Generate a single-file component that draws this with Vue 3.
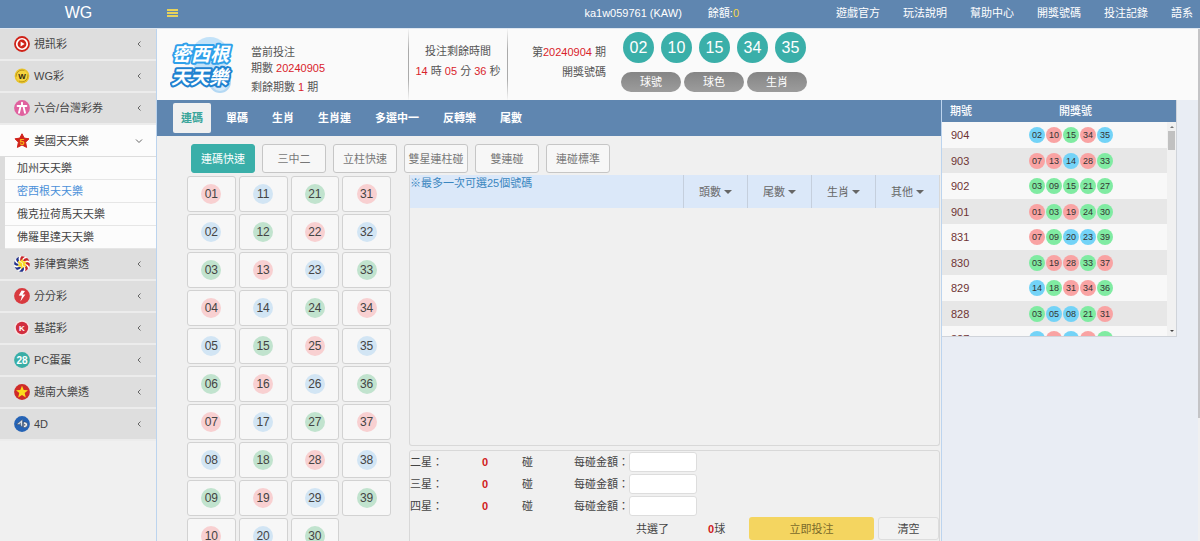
<script setup>
import { ref } from 'vue'

const topLinks = ['遊戲官方', '玩法說明', '幫助中心', '開獎號碼', '投注記錄']

const menu = [
  { icon: 'play', label: '視訊彩' },
  { icon: 'wg', label: 'WG彩' },
  { icon: 'six', label: '六合/台灣彩券' },
  {
    icon: 'star', label: '美國天天樂', open: true,
    children: ['加州天天樂', '密西根天天樂', '俄克拉荷馬天天樂', '佛羅里達天天樂'],
  },
  { icon: 'ph', label: '菲律賓樂透' },
  { icon: 'bolt', label: '分分彩' },
  { icon: 'keno', label: '基諾彩' },
  { icon: 'pc', label: 'PC蛋蛋' },
  { icon: 'vn', label: '越南大樂透' },
  { icon: 'four', label: '4D' },
]
const currentGame = '密西根天天樂'

const tabs = ['連碼', '單碼', '生肖', '生肖連', '多選中一', '反轉樂', '尾數']
const modes = ['連碼快速', '三中二', '立柱快速', '雙星連柱碰', '雙連碰', '連碰標準']
const activeTab = ref('連碼')
const activeMode = ref('連碼快速')
const views = ['球號', '球色', '生肖']
const filters = ['頭數', '尾數', '生肖', '其他']
const stars = ['二星', '三星', '四星']
const lastDraw = ['02', '10', '15', '34', '35']

const red = [1, 4, 7, 10, 13, 16, 19, 22, 25, 28, 31, 34, 37]
const blue = [2, 5, 8, 11, 14, 17, 20, 23, 26, 29, 32, 35, 38]
const colour = (n) => (red.includes(+n) ? 'red' : blue.includes(+n) ? 'blue' : 'green')
const pad = (n) => String(n).padStart(2, '0')

const cells = []
for (let row = 1; row <= 10; row++) {
  for (let col = 0; col < 4; col++) {
    const n = row + col * 10
    if (n <= 39) cells.push(pad(n))
  }
}

const history = [
  ['904', '02 10 15 34 35'],
  ['903', '07 13 14 28 33'],
  ['902', '03 09 15 21 27'],
  ['901', '01 03 19 24 30'],
  ['831', '07 09 20 23 39'],
  ['830', '03 19 28 33 37'],
  ['829', '14 18 31 34 36'],
  ['828', '03 05 08 21 31'],
  ['827', '02 10 17 22 36'],
].map(([id, balls]) => ({ id, balls: balls.split(' ') }))

const swirl = [0, 45, 90, 135, 180, 225, 270, 315]
</script>

<template>
  <div class="page">
    <header class="topbar">
      <div class="brand">WG</div>
      <button class="burger" aria-label="選單"><i></i><i></i><i></i></button>
      <div class="account">
        <span>ka1w059761 (KAW)</span>
        <span>餘額:<b>0</b></span>
      </div>
      <nav class="top-links">
        <a v-for="l in topLinks" :key="l" href="#">{{ l }}</a>
        <a href="#">語系</a>
      </nav>
    </header>

    <div class="body">
      <aside class="sidebar">
        <div v-for="m in menu" :key="m.label">
          <a href="#" class="menu-item" :class="{ open: m.open }">
            <svg class="menu-icon" viewBox="0 0 16 16" aria-hidden="true">
              <template v-if="m.icon === 'play'">
                <circle cx="8" cy="8" r="7" fill="#fff" stroke="#cf2218" stroke-width="1.8" />
                <circle cx="8" cy="8" r="4.4" fill="#cf2218" />
                <path d="M6.6 5.4 10.6 8 6.6 10.6z" fill="#fff" />
              </template>
              <template v-else-if="m.icon === 'wg'">
                <circle cx="8" cy="8" r="7.4" fill="#e9c42c" />
                <circle cx="8" cy="8" r="5.8" fill="#f5d540" stroke="#a98512" stroke-width=".7" stroke-dasharray="12 5" />
                <text x="8" y="11" text-anchor="middle" font-size="8" font-weight="700" fill="#332a10">W</text>
              </template>
              <template v-else-if="m.icon === 'six'">
                <circle cx="8" cy="8" r="7.9" fill="#e0619f" />
                <path d="M8 2.8v2.7M3.6 6h8.8M6.3 7.4 5 12.8M9.7 7.4 11 12.8" stroke="#fff" stroke-width="1.9" fill="none" stroke-linecap="round" />
              </template>
              <template v-else-if="m.icon === 'star'">
                <path d="M8 .8 10.2 5.1 15 5.8 11.6 9.2 12.6 14.4 8 12 3.4 14.4 4.4 9.2 1 5.8 5.8 5.1z" fill="#d0211a" stroke="#d0211a" stroke-linejoin="round" />
                <text x="8" y="11.6" text-anchor="middle" font-size="9" font-weight="700" fill="#f9b616">5</text>
              </template>
              <template v-else-if="m.icon === 'ph'">
                <circle cx="8" cy="8" r="7.9" fill="#fff" />
                <path
                  v-for="a in swirl" :key="a" :transform="`rotate(${a} 8 8)`"
                  d="M8 4.2Q8.4 1.8 11 .7A7.9 7.9 0 0 0 7.4.2Q5.6 2 6 5z"
                  :fill="a < 180 ? '#c9252b' : '#22308a'"
                />
                <path
                  v-for="a in [0, 60, 120, 180, 240, 300]" :key="'y' + a" :transform="`rotate(${a} 8 8)`"
                  d="M6 8Q5.6 4.4 9 2.8 8.2 5.4 10 8z" fill="#f7d823"
                />
                <path d="M5.2 5.2Q9.6 6.4 8.6 8.6T11 11.4" fill="none" stroke="#fff6c4" />
              </template>
              <template v-else-if="m.icon === 'bolt'">
                <circle cx="8" cy="8" r="7.9" fill="#d83a3f" />
                <path d="M7.6 2.6 4.8 7.4 8 7.8 6.4 13.4 11.4 6.6 8.6 6.4 11 3z" fill="#fff" />
              </template>
              <template v-else-if="m.icon === 'keno'">
                <circle cx="8" cy="8" r="7.8" fill="#f7e4e4" />
                <circle cx="8" cy="8" r="6.2" fill="#d22e3e" />
                <text x="8" y="10.9" text-anchor="middle" font-size="8" font-weight="700" fill="#fff">K</text>
              </template>
              <template v-else-if="m.icon === 'pc'">
                <circle cx="8" cy="8" r="7.9" fill="#3aaea6" />
                <text x="8" y="11.5" text-anchor="middle" font-size="10" font-weight="700" fill="#fff">28</text>
              </template>
              <template v-else-if="m.icon === 'vn'">
                <circle cx="8" cy="8" r="7.9" fill="#cf2b28" />
                <path d="M8 1.8 9.7 6 14 6.2 10.7 9 11.8 13.4 8 11 4.2 13.4 5.3 9 2 6.2 6.3 6z" fill="#fbdc1c" />
              </template>
              <template v-else>
                <circle cx="8" cy="8" r="7.9" fill="#2563b5" />
                <path d="M8.2 3.6 2.4 8.6h4.4v1.8h1.8V4z" fill="#dfe6ee" stroke="#29384c" stroke-width=".5" />
                <path d="M6.8 6.6v1.2H5.4z" fill="#29384c" />
                <path d="M9.4 6h1.4a2.7 2.7 0 0 1 0 5.4H9.4z" fill="#fff" stroke="#29384c" stroke-width=".6" />
                <path d="M10.8 7.8v1.8" stroke="#29384c" />
              </template>
            </svg>
            <span>{{ m.label }}</span>
            <svg class="chevron" viewBox="0 0 8 8" aria-hidden="true">
              <path :d="m.open ? 'M1 2.5 4 5.5 7 2.5' : 'M5.5 1.5 3 4 5.5 6.5'" />
            </svg>
          </a>
          <div v-if="m.children" class="submenu">
            <a v-for="c in m.children" :key="c" href="#" :class="{ current: c === currentGame }">{{ c }}</a>
          </div>
        </div>
      </aside>

      <main class="main">
        <section class="info">
          <svg class="logo" viewBox="0 0 64 60" role="img" aria-label="密西根天天樂">
            <circle cx="40" cy="20" r="19" fill="#c3e2f8" />
            <circle cx="50" cy="46" r="10" fill="#d4eafa" stroke="#b4d8f3" stroke-width="2" />
            <g class="logo-text">
              <text x="2" y="25">密西根</text>
              <text x="1" y="48" class="deep">天天樂</text>
            </g>
          </svg>
          <div class="period">
            <div>當前投注</div>
            <div>期數 <em>20240905</em></div>
            <div class="remain">剩餘期數 <em>1</em> 期</div>
          </div>
          <div class="countdown">
            <div>投注剩餘時間</div>
            <div><em>14</em> 時 <em>05</em> 分 <em>36</em> 秒</div>
          </div>
          <div class="last">
            <div>第<em>20240904</em> 期</div>
            <div>開獎號碼</div>
          </div>
          <div class="draw">
            <div class="draw-balls"><span v-for="b in lastDraw" :key="b">{{ b }}</span></div>
            <div class="draw-views"><button v-for="v in views" :key="v">{{ v }}</button></div>
          </div>
        </section>

        <div class="columns">
          <section class="betting">
            <nav class="tabs">
              <button v-for="t in tabs" :key="t" :class="{ active: t === activeTab }" @click="activeTab = t">{{ t }}</button>
            </nav>
            <div class="modes">
              <button v-for="m in modes" :key="m" :class="{ active: m === activeMode }" @click="activeMode = m">{{ m }}</button>
            </div>
            <div class="work">
              <div class="numbers">
                <button v-for="n in cells" :key="n"><span :class="colour(n)">{{ n }}</span></button>
              </div>
              <div class="slip">
                <div class="picked">
                  <div class="hint">
                    <p>※最多一次可選25個號碼</p>
                    <button v-for="f in filters" :key="f">{{ f }}<i></i></button>
                  </div>
                </div>
                <form class="stakes" @submit.prevent>
                  <div v-for="(s, i) in stars" :key="s" class="stake">
                    <span>{{ s }}：</span>
                    <b>0</b>
                    <span class="unit">碰</span>
                    <label :for="'stake' + i">每碰金額：</label>
                    <input :id="'stake' + i" type="text" />
                  </div>
                  <div class="actions">
                    <span class="chosen">共選了</span>
                    <span class="count"><b>0</b>球</span>
                    <button class="submit">立即投注</button>
                    <button type="reset" class="clear">清空</button>
                  </div>
                </form>
              </div>
            </div>
          </section>

          <aside class="results">
            <div class="results-box">
              <table>
                <thead><tr><th>期號</th><th>開獎號</th></tr></thead>
                <tbody>
                  <tr v-for="h in history" :key="h.id">
                    <td>{{ h.id }}</td>
                    <td><div class="balls"><span v-for="b in h.balls" :key="b" :class="colour(b)">{{ b }}</span></div></td>
                  </tr>
                </tbody>
              </table>
              <div class="scroll" aria-hidden="true"><i class="up"></i><i class="thumb"></i><i class="down"></i></div>
            </div>
          </aside>
        </div>
      </main>
      <div class="page-scroll" aria-hidden="true"><i></i></div>
    </div>
  </div>
</template>

<style>
body { background: #f0f0f0; }
</style>

<style scoped>
.page, .page * { box-sizing: border-box; }
.page {
  height: 100vh;
  overflow: hidden;
  display: flex;
  flex-direction: column;
  font: 11px/16px "Liberation Sans", "Noto Sans CJK TC", sans-serif;
  color: #555;
  background: #f0f0f0;
}
button, input { font: inherit; color: inherit; margin: 0; padding: 0; }
button { cursor: pointer; border: 0; background: none; white-space: nowrap; }
a { color: inherit; text-decoration: none; }
em { font-style: normal; color: #d9232b; }
i { display: block; }

.topbar {
  flex: none;
  display: flex;
  align-items: center;
  height: 29px;
  padding-bottom: 3px;
  background: #5f86b0;
  border-bottom: 1px solid #dfe7f0;
  color: #fff;
}
.brand { width: 157px; text-align: center; font-size: 16px; }
.burger { margin-left: 10px; width: 11px; display: grid; gap: 1px; }
.burger i { height: 2px; background: #e6d25c; }
.account { margin-left: auto; display: flex; gap: 26px; }
.account b { font-weight: 400; color: #f5d547; }
.top-links { display: flex; gap: 23px; margin-left: 97px; padding-right: 7px; }

.body { flex: 1; display: flex; min-height: 0; }
.sidebar { flex: none; width: 157px; border-right: 1px solid #bcd4ee; color: #444; }
.menu-item {
  display: flex;
  align-items: center;
  gap: 4px;
  height: 32px;
  padding: 0 13px 0 14px;
  background: #dedede;
  border-bottom: 2px solid #ececec;
}
.menu-item.open { background: #fcfcfc; border-bottom: 1px solid #ddd; }
.menu-icon { width: 16px; height: 16px; flex: none; }
.chevron { width: 8px; height: 8px; margin-left: auto; fill: none; stroke: #666; }
.submenu { border-left: 5px solid #dcdcdc; background: #fcfcfc; }
.submenu a { display: block; height: 23px; padding: 3px 0 0 12px; border-bottom: 1px solid #e6e6e6; }
.submenu .current { color: #4a90d9; }

.main { flex: 1; min-width: 0; display: flex; flex-direction: column; }
.page-scroll { flex: none; width: 2px; background: #f0f0f0; }
.page-scroll i { height: 76%; background: #c4c4c6; }
.info { flex: none; display: flex; height: 71px; background: #fafafa; }
.logo { width: 64px; height: 60px; margin: 7px 0 0 13px; flex: none; }
.logo-text {
  font-size: 19px;
  font-weight: 700;
  font-style: italic;
  fill: #fff;
  stroke: #2fa0ea;
  stroke-width: 4px;
  stroke-linejoin: round;
  paint-order: stroke;
}
.logo-text .deep { stroke: #1f82d0; }
.period { width: 174px; padding: 15px 0 0 17px; }
.remain { margin-top: 3px; }
.countdown {
  width: 100px;
  padding-top: 12px;
  text-align: center;
  line-height: 20px;
  border: solid #bbb;
  border-width: 0 1px;
  border-image: linear-gradient(#fafafa, #aaa 30%, #aaa 70%, #fafafa) 1;
}
.last { width: 98px; padding-top: 13px; text-align: right; line-height: 20px; }
.draw { padding: 3px 0 0 15px; }
.draw-balls { display: flex; gap: 7px; padding-left: 2px; }
.draw-balls span {
  width: 31px;
  height: 31px;
  border-radius: 50%;
  background: #3aafa9;
  color: #fff;
  font-size: 16px;
  line-height: 31px;
  text-align: center;
}
.draw-views { display: flex; gap: 3px; margin-top: 9px; }
.draw-views button { width: 60px; height: 20px; border-radius: 10px; background: linear-gradient(#858585, #9c9c9c); color: #fff; }

.columns { flex: 1; display: flex; min-height: 0; }
.betting { flex: 1; min-width: 0; border-right: 1px solid #bcd4ee; }
.tabs { display: flex; gap: 2px; height: 36px; padding: 3px 16px; background: #5f86b0; }
.tabs button { padding: 0 11px; color: #fff; font-weight: 700; }
.tabs .active { margin-right: 2px; padding: 0 8px; border-radius: 2px; background: #f0f0f0; color: #3aa59b; }
.modes { display: flex; gap: 7px; padding: 8px 34px 2px; }
.modes button { width: 64px; height: 29px; border: 1px solid #c6c6c6; border-radius: 3px; background: #f7f7f7; color: #777; }
.modes .active { border-color: #3aafa9; background: #3aafa9; color: #fff; }

.work { display: flex; align-items: flex-start; gap: 18px; padding: 0 1px 0 30px; }
.numbers { flex: none; width: 204px; padding-top: 1px; display: grid; grid-template-columns: repeat(4, 1fr); gap: 2px 3px; }
.numbers button { display: grid; place-items: center; height: 36px; border: 1px solid #d2d2d2; border-radius: 3px; background: #f7f7f7; }
.numbers span { width: 20px; height: 20px; border-radius: 50%; font-size: 12px; line-height: 20px; color: #444; }
.numbers .red { background: #f8d0d1; }
.numbers .blue { background: #d2e5f4; }
.numbers .green { background: #c1e3ce; }

.slip { flex: 1; min-width: 0; }
.picked { height: 271px; border: 1px solid #d8d8d8; border-top: 0; border-radius: 0 0 3px 3px; }
.hint { display: flex; height: 33px; background: #dbe8f9; }
.hint p { flex: 1; margin: 0; color: #3a86bf; }
.hint button { display: flex; align-items: center; justify-content: center; gap: 3px; width: 64px; border-left: 1px solid #c5cfdd; color: #666; }
.hint i { border: solid transparent; border-width: 4px 4px 0; border-top-color: #666; }
.stakes { margin-top: 4px; height: 100px; border: 1px solid #d8d8d8; border-radius: 3px; color: #444; }
.stakes b { color: #d0201c; }
.stake { display: flex; align-items: center; height: 22px; }
.stake > span:first-child { width: 72px; }
.stake > b { width: 40px; }
.stake .unit { width: 52px; }
.stake label { width: 55px; white-space: nowrap; }
.stake input { width: 68px; height: 20px; padding: 0 4px; border: 1px solid #ddd; border-radius: 3px; background: #fff; }
.actions { display: flex; align-items: center; height: 23px; }
.chosen { margin-left: auto; width: 72px; }
.count { width: 41px; }
.submit { width: 125px; height: 23px; border-radius: 3px; background: #f4d560; color: #7a6a2a; }
.clear { width: 61px; height: 23px; margin-left: 4px; border: 1px solid #ddd; border-radius: 3px; background: #f2f2f2; }

.results { flex: none; width: 256px; background: #e9edf4; }
.results-box { position: relative; width: 235px; height: 237px; overflow: hidden; border: 1px solid #d0d4da; border-width: 0 1px 1px 0; }
table { width: 100%; border-collapse: collapse; table-layout: fixed; }
th { height: 22px; padding: 0; background: #5f86b0; color: #fff; font-weight: 500; }
th:first-child { width: 65px; padding-left: 8px; text-align: left; }
th:last-child { padding-right: 32px; }
td { height: 25px; padding: 0; background: #e7e7e7; }
tr:nth-child(odd) td { height: 26px; background: #f8f8f8; }
td:first-child { padding-left: 9px; color: #6e3434; }
.balls { display: flex; gap: 1px; padding-left: 22px; }
.balls span { width: 16px; height: 16px; border-radius: 50%; font-size: 9px; line-height: 16px; text-align: center; color: #333; }
.balls .red { background: #f9a3a3; }
.balls .blue { background: #73d3f7; }
.balls .green { background: #80eba2; }
.scroll {
  position: absolute;
  top: 22px;
  right: 0;
  bottom: 0;
  width: 9px;
  display: flex;
  flex-direction: column;
  align-items: center;
  padding: 4px 0;
  background: #f1f1f1;
}
.up { border: solid transparent; border-width: 0 2px 2px; border-bottom-color: #777; }
.thumb { width: 7px; height: 19px; margin-top: 3px; background: #c1c1c1; }
.down { margin-top: auto; border: solid transparent; border-width: 2px 2px 0; border-top-color: #444; }
</style>
